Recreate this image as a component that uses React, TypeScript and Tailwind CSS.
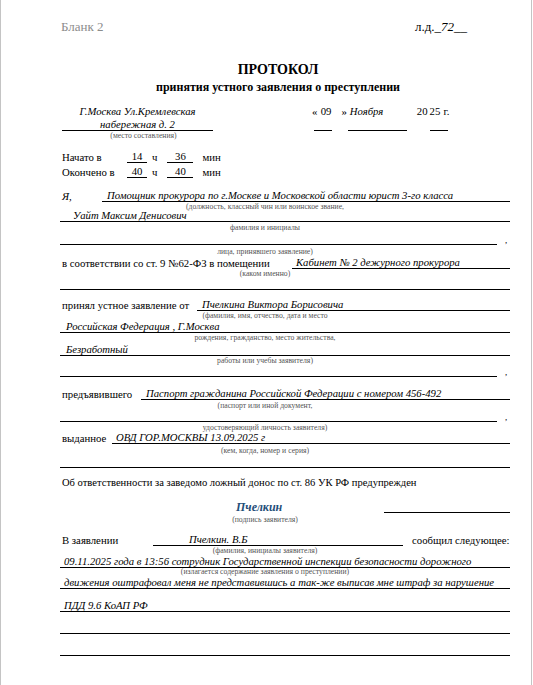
import React from "react";

// Протокол принятия устного заявления о преступлении (бланк 2)

const Caption = ({ children, className = "" }: { children: React.ReactNode; className?: string }) => (
  <div className={`pr-[40px] text-center text-[7.7px] leading-[7px] whitespace-nowrap text-[#555] ${className}`}>{children}</div>
);

const Line = ({ className = "" }: { className?: string }) => (
  <div className={`h-[12px] border-b border-black ${className}`} />
);

const CommaLine = ({ className = "" }: { className?: string }) => (
  <div className={`flex items-end ${className}`}>
    <div className="h-[12px] w-[437px] border-b border-black" />
    <span className="ml-[8px] text-[9px] leading-[9px]">,</span>
  </div>
);

export default function App() {
  return (
    <div className="min-h-[685px] w-[532px] border-x border-[#c4c4c4] bg-white pt-[20px] pl-[59px] pr-[21px] [font-family:Liberation_Serif,Times_New_Roman,serif] text-[10.75px] whitespace-nowrap text-black">
      {/* Header */}
      <div className="flex justify-between text-[13px] leading-[14px]">
        <span className="pl-[1px] text-[#8c8c8c]">Бланк 2</span>
        <span className="pr-[43px]">
          л.д._<span className="italic">72</span>__
        </span>
      </div>

      <div className="mt-[27px] pr-[14px] text-center text-[14px] font-bold leading-[18px]">ПРОТОКОЛ</div>
      <div className="mt-[1px] pr-[14px] text-center text-[12px] font-bold leading-[14px]">
        принятия устного заявления о преступлении
      </div>

      {/* Place and date */}
      <div className="mt-[11px] flex items-start leading-[13px]">
        <div className="ml-[2px] w-[151px]">
          <div className="h-[26px] border-b border-black text-center text-[10.7px] italic">
            Г.Москва Ул.Кремлевская
            <br />
            набережная д. 2
          </div>
          <div className="mt-[1px] pl-[12px] text-center text-[7.7px] leading-[7px] text-[#555]">(место составления)</div>
        </div>
        <div className="ml-[99px] flex h-[26px]">
          <span>«</span>
          <span className="-ml-[3px] w-[18px] border-b border-black pr-[1px] text-right">09</span>
          <span className="ml-[9px]">»</span>
          <span className="ml-[1px] w-[59px] border-b border-black pl-[2px] text-[10.7px] italic">Ноября</span>
          <span className="ml-[10px]">20</span>
          <span className="ml-[2px] w-[18px] border-b border-black">25</span>
          <span className="-ml-[4px]">г.</span>
        </div>
      </div>

      {/* Time */}
      <div className="mt-[12px] flex items-end leading-[11px]">
        <span className="ml-[2px] w-[65px]">Начато в</span>
        <span className="w-[20px] border-b border-black text-center">14</span>
        <span className="ml-[5px]">ч</span>
        <span className="ml-[10px] w-[26px] border-b border-black text-center">36</span>
        <span className="ml-[9px]">мин</span>
      </div>
      <div className="mt-[3px] flex items-end leading-[11px]">
        <span className="ml-[2px] w-[65px]">Окончено в</span>
        <span className="w-[20px] border-b border-black text-center">40</span>
        <span className="ml-[5px]">ч</span>
        <span className="ml-[10px] w-[26px] border-b border-black text-center">40</span>
        <span className="ml-[9px]">мин</span>
      </div>

      {/* Я, ... */}
      <div className="mt-[12px] flex items-end leading-[11px]">
        <span className="w-[42px] pl-[2px] italic">Я,</span>
        <div className="h-[12px] flex-1 border-b border-black pl-[5px] text-[10.7px] italic">
          Помощник прокурора по г.Москве и Московской области юрист 3-го класса
        </div>
      </div>
      <Caption className="mt-[1px]">(должность, классный чин или воинское звание,</Caption>
      <div className="h-[12px] border-b border-black pl-[13px] text-[10.7px] italic leading-[11px]">Уайт Максим Денисович</div>
      <Caption className="mt-[2px]">фамилия и инициалы</Caption>
      <CommaLine className="mt-[2px]" />
      <Caption className="mt-[3px]">лица, принявшего заявление)</Caption>

      <div className="mt-[2px] flex items-end leading-[11px]">
        <span className="w-[232px] pl-[2px]">в соответствии со ст. 9 №62-ФЗ в помещении</span>
        <div className="h-[12px] flex-1 border-b border-black pl-[4px] text-[10.7px] italic">Кабинет № 2 дежурного прокурора</div>
      </div>
      <Caption className="mt-[1px]">(каком именно)</Caption>
      <Line className="mt-[1px]" />

      {/* Заявитель */}
      <div className="mt-[9px] flex items-end leading-[11px]">
        <span className="w-[137px] pl-[2px]">принял устное заявление от</span>
        <div className="h-[12px] flex-1 border-b border-black pl-[5px] text-[10.7px] italic">Пчелкина Виктора Борисовича</div>
      </div>
      <Caption className="mt-[1px]">(фамилия, имя, отчество, дата и место</Caption>
      <div className="mt-[2px] h-[12px] border-b border-black pl-[6px] text-[10.7px] italic leading-[11px]">Российская Федерация , Г.Москва</div>
      <Caption className="mt-[1px]">рождения, гражданство, место жительства,</Caption>
      <div className="mt-[3px] h-[12px] border-b border-black pl-[6px] text-[10.7px] italic leading-[11px]">Безработный</div>
      <Caption className="mt-[1px]">работы или учебы заявителя)</Caption>
      <CommaLine className="mt-[1px]" />

      <div className="mt-[11px] flex items-end leading-[11px]">
        <span className="w-[81px] pl-[2px]">предъявившего</span>
        <div className="h-[12px] flex-1 border-b border-black pl-[5px] text-[10.7px] italic">
          Паспорт гражданина Российской Федерации с номером 456-492
        </div>
      </div>
      <Caption className="mt-[2px]">(паспорт или иной документ,</Caption>
      <CommaLine className="mt-[1px]" />
      <Caption className="mt-[2px]">удостоверяющий личность заявителя)</Caption>
      <div className="mt-[1px] flex items-end leading-[11px]">
        <span className="w-[52px] pl-[2px]">выданное</span>
        <div className="h-[12px] flex-1 border-b border-black pl-[4px] text-[10.7px] italic">ОВД ГОР.МОСКВЫ 13.09.2025 г</div>
      </div>
      <Caption className="mt-[3px]">(кем, когда, номер и серия)</Caption>
      <Line className="mt-[2px]" />

      <div className="mt-[8px] pl-[2px] text-[10.55px] leading-[13px]">
        Об ответственности за заведомо ложный донос по ст. 86 УК РФ предупрежден
      </div>

      {/* Подпись */}
      <div className="mt-[11px] flex items-start">
        <span className="ml-[176px] text-[12px] font-bold italic leading-[15px] text-[#1f4e79]">Пчелкин</span>
        <div className="ml-auto h-[13px] w-[126px] border-b border-black" />
      </div>
      <Caption className="mt-[1px]">(подпись заявителя)</Caption>

      {/* Содержание */}
      <div className="mt-[11px] flex items-end leading-[11px]">
        <span className="w-[93px] pl-[2px]">В заявлении</span>
        <div className="h-[12px] w-[250px] border-b border-black pl-[36px] text-[10.7px] italic">Пчелкин. В.Б</div>
        <span className="ml-[9px]">сообщил следующее:</span>
      </div>
      <Caption className="mt-[1px]">(фамилия, инициалы заявителя)</Caption>
      <div className="mt-[2px] h-[12px] border-b border-black pl-[4px] text-[10.7px] italic leading-[11px]">
        09.11.2025 года в 13:56 сотрудник Государственной инспекции безопасности дорожного
      </div>
      <Caption>(излагается содержание заявления о преступлении)</Caption>
      <div className="mt-[2px] h-[12px] border-b border-black pl-[4px] text-[10.7px] italic leading-[11px]">
        движения оштрафовал меня не представившись а так-же выписав мне штраф за нарушение
      </div>
      <div className="mt-[11px] h-[12px] border-b border-black pl-[4px] text-[10.7px] italic leading-[11px]">ПДД 9.6 КоАП РФ</div>
      <Line className="mt-[10px]" />
      <Line className="mt-[10px]" />
    </div>
  );
}
